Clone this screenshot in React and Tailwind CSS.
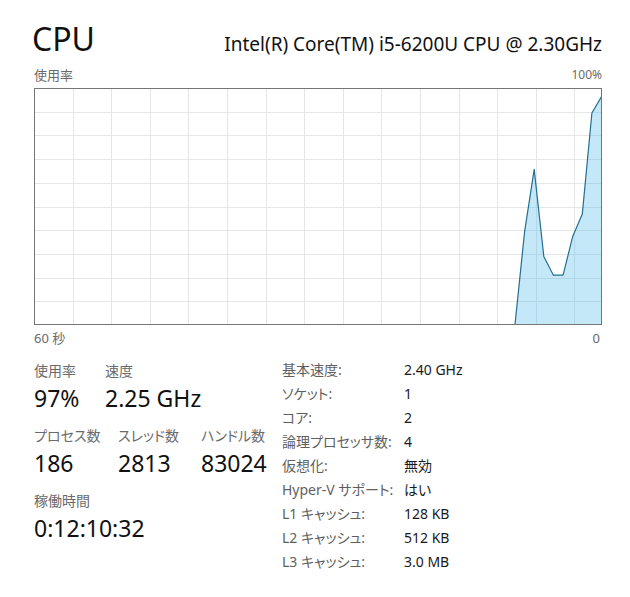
import { useMemo } from 'react'

const CHART_W = 568
const CHART_H = 237

// last 60 seconds of CPU usage, oldest first
const usage = [
  ...Array(50).fill(0),
  0, 39.5, 66, 29, 21, 21, 37.5, 47, 90, 97,
]

const specs = [
  ['基本速度:', '2.40 GHz'],
  ['ソケット:', '1'],
  ['コア:', '2'],
  ['論理プロセッサ数:', '4'],
  ['仮想化:', '無効'],
  ['Hyper-V サポート:', 'はい'],
  ['L1 キャッシュ:', '128 KB'],
  ['L2 キャッシュ:', '512 KB'],
  ['L3 キャッシュ:', '3.0 MB'],
]

function UsageChart({ data }) {
  const { line, area } = useMemo(() => {
    const step = (CHART_W - 1) / (data.length - 1)
    const pts = data.map((v, i) => [0.5 + i * step, CHART_H - 0.5 - (v / 100) * (CHART_H - 2)])
    const first = Math.max(0, data.findIndex((v) => v > 0) - 1)
    const visible = pts.slice(first)
    const line = visible.map(([x, y]) => `${x.toFixed(1)},${y.toFixed(1)}`).join(' ')
    const last = visible[visible.length - 1]
    const area = `${line} ${last[0].toFixed(1)},${CHART_H - 0.5} ${visible[0][0].toFixed(1)},${CHART_H - 0.5}`
    return { line, area }
  }, [data])

  const cols = Array.from({ length: 14 }, (_, i) => 0.5 + Math.round((i + 1) * 38.6))
  const rows = Array.from({ length: 9 }, (_, i) => 0.5 + Math.round((i + 1) * 23.7))

  return (
    <svg width={CHART_W} height={CHART_H} viewBox={`0 0 ${CHART_W} ${CHART_H}`} className="block">
      {cols.map((x) => (
        <line key={`c${x}`} x1={x} y1={0} x2={x} y2={CHART_H} stroke="#e4e6e8" strokeWidth={1} />
      ))}
      {rows.map((y) => (
        <line key={`r${y}`} x1={0} y1={y} x2={CHART_W} y2={y} stroke="#e4e6e8" strokeWidth={1} />
      ))}
      <polygon points={area} fill="#3bb4e6" fillOpacity={0.3} />
      <polyline points={line} fill="none" stroke="#22708f" strokeWidth={1.2} strokeLinejoin="round" />
      <rect x={0.5} y={0.5} width={CHART_W - 1} height={CHART_H - 1} fill="none" stroke="#767676" strokeWidth={1} />
    </svg>
  )
}

function Stat({ label, value, className = '' }) {
  return (
    <div className={className}>
      <div className="text-[14px] leading-[25px] text-[#6a6a6a]">{label}</div>
      <div className="text-[23px] leading-[30px] text-[#111]">{value}</div>
    </div>
  )
}

export default function App() {
  return (
    <div className="w-[630px] h-[597px] bg-white pl-[34px] pr-[28px] pt-[23px] font-['Noto_Sans','Noto_Sans_CJK_JP',sans-serif] [font-feature-settings:'palt'] overflow-hidden">
      <div className="flex items-baseline justify-between h-[32px]">
        <h1 className="text-[32px] leading-[32px] text-[#111] -ml-[2px]">CPU</h1>
        <div className="text-[19px] leading-[32px] text-[#111]">Intel(R) Core(TM) i5-6200U CPU @ 2.30GHz</div>
      </div>

      <div className="mt-[12px] flex justify-between text-[13px] leading-[16px] text-[#6a6a6a]">
        <span>使用率</span>
        <span className="text-[12px]">100%</span>
      </div>

      <div className="mt-[5px]">
        <UsageChart data={usage} />
      </div>

      <div className="mt-[5px] flex justify-between text-[13px] leading-[16px] text-[#6a6a6a]">
        <span>60 秒</span>
        <span className="pr-[2px]">0</span>
      </div>

      <div className="mt-[12px] flex">
        <div className="w-[248px] flex flex-col gap-[10px]">
          <div className="flex">
            <Stat label="使用率" value="97%" className="w-[71px]" />
            <Stat label="速度" value="2.25 GHz" />
          </div>
          <div className="flex">
            <Stat label="プロセス数" value="186" className="w-[84px]" />
            <Stat label="スレッド数" value="2813" className="w-[83px]" />
            <Stat label="ハンドル数" value="83024" />
          </div>
          <Stat label="稼働時間" value="0:12:10:32" />
        </div>

        <div className="grid grid-cols-[122px_1fr] text-[14px] leading-[24px]">
          {specs.map(([k, v]) => (
            <div key={k} className="contents">
              <span className="text-[#5f5f5f] whitespace-nowrap">{k}</span>
              <span className="text-[#1a1a1a]">{v}</span>
            </div>
          ))}
        </div>
      </div>
    </div>
  )
}
